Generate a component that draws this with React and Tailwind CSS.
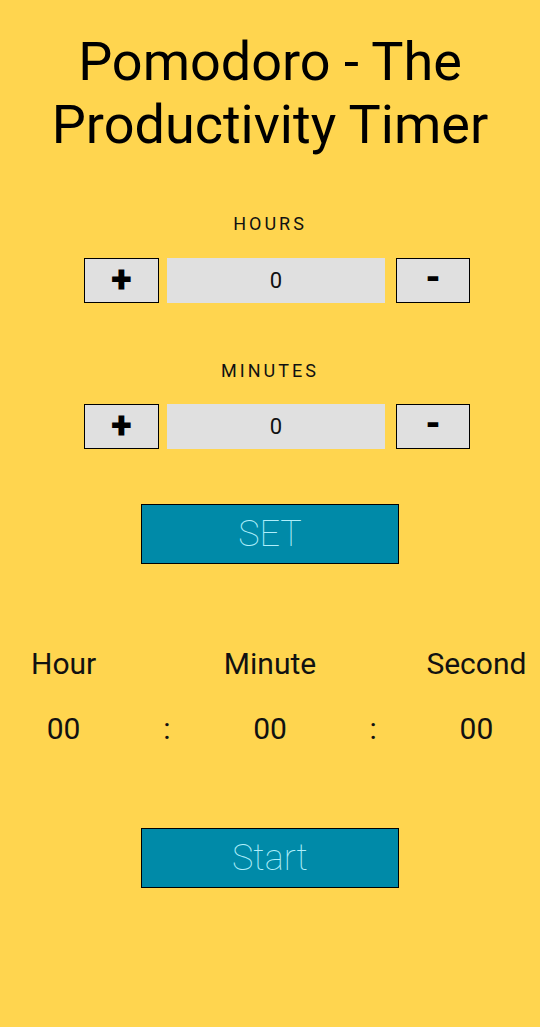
export default function App() {
  const Row = ({ label, gap }) => (
    <div className="flex flex-col items-center">
      <div className="text-[18px] tracking-[3px] text-[#111] leading-none">{label}</div>
      <div className={`${gap} ml-[14px] flex items-center w-[386px]`}>
        <button className="w-[75px] h-[45px] bg-[#e0e0e0] border border-black text-[38px] font-black leading-none flex items-center justify-center pb-[3px]">+</button>
        <div className="ml-[8px] w-[218px] h-[45px] bg-[#e0e0e0] flex items-center justify-center text-[22px] text-[#111]">0</div>
        <button className="ml-[11px] w-[74px] h-[45px] bg-[#e0e0e0] border border-black text-[36px] font-black leading-none flex items-center justify-center pb-[5px]">-</button>
      </div>
    </div>
  );
  return (
    <div className="w-[540px] h-[1027px] bg-[#ffd54f] flex flex-col items-center" style={{ fontFamily: "Roboto, sans-serif" }}>
      <h1 className="mt-[30px] text-[54px] leading-[63px] text-black text-center font-normal">
        Pomodoro - The<br />Productivity Timer
      </h1>
      <div className="mt-[59px]"><Row label="HOURS" gap="mt-[25px]" /></div>
      <div className="mt-[59px]"><Row label="MINUTES" gap="mt-[24px]" /></div>
      <button className="mt-[55px] w-[258px] h-[60px] bg-[#008aa8] border border-black text-[#b0effc] text-[36px] font-thin leading-none">SET</button>
      <div className="mt-[77px] w-full px-[12px] grid grid-cols-5 text-[30px] text-[#111] text-center">
        <div>Hour</div><div></div><div>Minute</div><div></div><div>Second</div>
      </div>
      <div className="mt-[20px] w-full px-[12px] grid grid-cols-5 text-[30px] text-[#111] text-center">
        <div>00</div><div>:</div><div>00</div><div>:</div><div>00</div>
      </div>
      <button className="mt-[77px] w-[258px] h-[60px] bg-[#008aa8] border border-black text-[#b0effc] text-[36px] font-thin leading-none">Start</button>
    </div>
  );
}
